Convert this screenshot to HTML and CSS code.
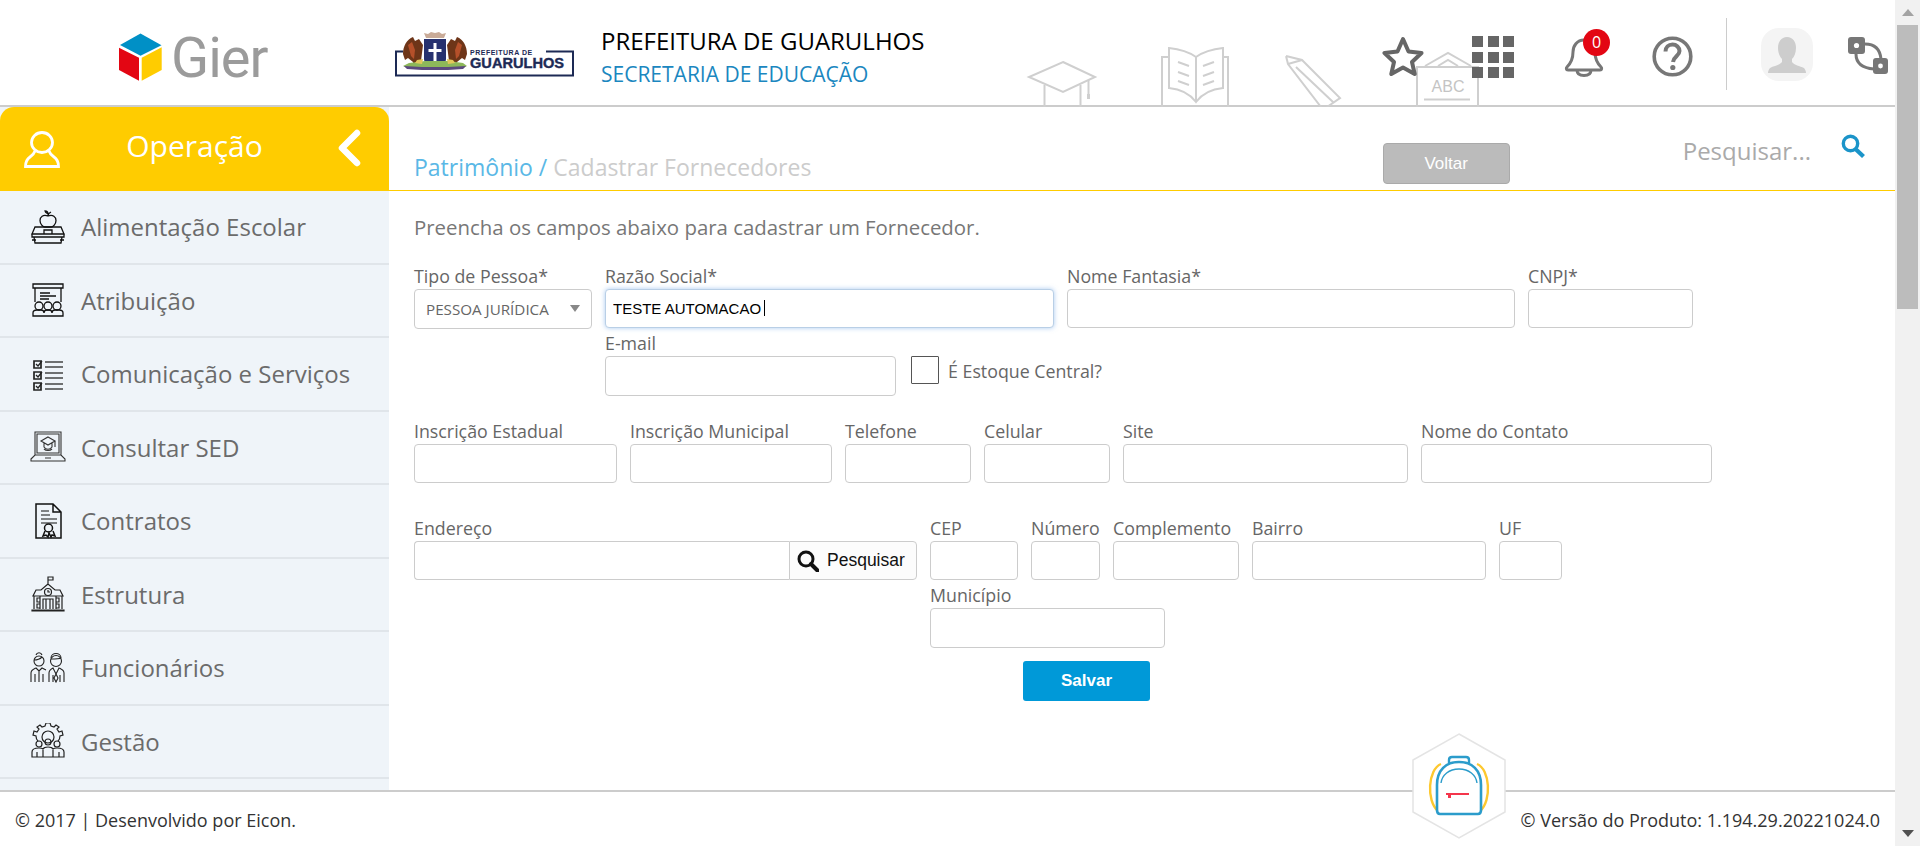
FILE: index.html
```html
<!DOCTYPE html>
<html lang="pt-BR">
<head>
    <meta charset="UTF-8">
    <meta name="viewport" content="width=device-width, initial-scale=1.0">
    <title>Cadastrar Fornecedores</title>
    <link rel="stylesheet" href="styles.css">
</head>
<body>
<div class="page">
    <div class="app">

        <header class="topbar">
            <svg class="deco" viewBox="1020 40 470 67" fill="none" stroke="#cfcfcf" stroke-width="2">
                <path d="M1063 62l32 15-32 15-34-15z"/>
                <path d="M1044.500 85v22M1080.500 85v22M1088.500 80v14"/>
                <path d="M1088.500 94v5" stroke-width="3"/>
                <path d="M1196 57c-7-5-17-8-27-9v40c11 1 21 6 27 14 6-8 16-13 27-14V48c-10 1-20 4-27 9zM1196 57v45"/>
                <path d="M1169 57h-7v50M1223 57h5v50"/>
                <path d="M1178 62l11 4M1178 72l11 4M1178 81l11 4M1214 62l-11 4M1214 72l-11 4M1214 81l-11 4"/>
                <path d="M1286 56l16 4 38 38-13 9M1286 56l2 8 33 43M1288 64l14-4M1296 67l37 35"/>
                <path d="M1417 107V67h61v40M1425 66l23-13 23 13M1438 66l10-6 10 6"/>
                <path d="M1424 99.500h46"/>
                <text class="deco-abc" x="1448" y="92">ABC</text>
            </svg>

            <div class="logo">
                <svg class="cube" viewBox="0 0 44 49">
                    <path fill="#0090c6" d="M21.500.5l21 11.700-21 10.500-20.500-10.700z"/>
                    <path fill="#e30613" d="M0 14.700l20 10v23L0 37z"/>
                    <path fill="#ffcc00" d="M22.700 24.700l20-10.400V37l-20 10.700z"/>
                </svg>
                <span class="logo-name">Gier</span>
            </div>

            <div class="city-logo">
                <svg class="city-art" viewBox="0 0 180 46">
                    <path d="M8 20.500H1v24h177v-24h-27" fill="none" stroke="#1d2a55" stroke-width="2"/>
                    <path fill="#6e3518" d="M8 23c0-8 4-15 10-17l2 4 4-2 4 6-2 16-4 4v4h-3l-1-7-5-4-3 2z"/>
                    <path fill="#6e3518" d="M72 23c0-8-4-15-10-17l-2 4-4-2-4 6 2 16 4 4v4h3l1-7 5-4 3 2z"/>
                    <path fill="#b5502a" d="M13 14l4-3 3 8-1 9-3-3zM67 14l-4-3-3 8 1 9 3-3z"/>
                    <path fill="#27316f" d="M29 8h22v20c0 4-5 7-11 9-6-2-11-5-11-9z"/>
                    <path fill="#fff" d="M38.500 12h3v6h5v3h-5v11h-3V21h-5v-3h5z"/>
                    <path fill="#c9ab98" d="M29 2l4 1 3-2 4 1 4-1 3 2 4-1-2 5H31z"/>
                    <path fill="#8db85a" d="M30 30h24l14 2 4 3-6 3H14l-6-3 6-3z"/>
                    <path fill="#5b4a7e" d="M9 35l18 1h26l18-1-3 3-15 1H27l-15-1z"/>
                    <path fill="#e3c65a" d="M52 28l6 1 2 3-7 1zM28 28l-6 1-2 3 7 1z"/>
                </svg>
                <span class="city-small">PREFEITURA DE</span>
                <span class="city-big">GUARULHOS</span>
            </div>

            <div class="titles">
                <div class="title-main">PREFEITURA DE GUARULHOS</div>
                <div class="title-sub">SECRETARIA DE EDUCAÇÃO</div>
            </div>

            <div class="tools">
                <svg class="tool-star" viewBox="0 0 42 40" fill="none" stroke="#666" stroke-width="4" stroke-linejoin="round">
                    <path d="M21 3l5.500 12.500 13 1.500-9.500 9 2.700 12L21 31.500 9.300 38l2.700-12-9.500-9 13-1.500z"/>
                </svg>
                <div class="tool-grid">
                    <i></i><i></i><i></i><i></i><i></i><i></i><i></i><i></i><i></i>
                </div>
                <div class="bell">
                    <svg class="tool-bell" viewBox="0 0 40 40" fill="none" stroke="#777" stroke-width="3" stroke-linejoin="round">
                        <path d="M20 3c-7 0-11 6-11 12 0 8-3 12-6 15-1 1-1 3 1 3h32c2 0 2-2 1-3-3-3-6-7-6-15 0-6-4-12-11-12z"/>
                        <path d="M13 33c0 4 3 5.500 7 5.500s7-1.500 7-5.500"/>
                    </svg>
                    <span class="badge">0</span>
                </div>
                <svg class="tool-help" viewBox="0 0 41 41" fill="none" stroke="#777" stroke-width="3.600">
                    <circle cx="20.500" cy="20.500" r="18.300"/>
                    <path d="M13.500 15.500c0-4 3-7 7-7s7 3 7 6.500c0 5-6 5.500-6.500 11" stroke-width="4"/>
                    <circle cx="20.800" cy="31.500" r="2.600" fill="#777" stroke="none"/>
                </svg>
                <span class="tool-line"></span>
                <div class="avatar">
                    <svg viewBox="0 0 52 53">
                        <path fill="#cdcdcd" d="M26 9c6 0 9 5 9 11 0 5-2 9-4 11v3c2 3 8 4 12 6 1 1 2 3 2 5H7c0-2 1-4 2-5 4-2 10-3 12-6v-3c-2-2-4-6-4-11 0-6 3-11 9-11z"/>
                    </svg>
                </div>
                <svg class="tool-net" viewBox="0 0 40 37">
                    <path fill="none" stroke="#777" stroke-width="3" d="M17 7c9 0 15 5 16 15M8 17c0 9 6 14 18 15"/>
                    <rect x="0" y="0" width="17" height="17" rx="3" fill="#777"/>
                    <rect x="25" y="21" width="15" height="16" rx="3" fill="#777"/>
                    <circle cx="8.500" cy="8.500" r="2.600" fill="#fff"/>
                    <circle cx="32.500" cy="29" r="2.400" fill="#fff"/>
                </svg>
            </div>
        </header>

        <div class="middle">
            <aside class="sidebar">
                <div class="side-head">
                    <svg class="side-user" viewBox="0 0 36 37" fill="none" stroke="#fff" stroke-width="2.800">
                        <ellipse cx="18" cy="11.500" rx="10.500" ry="10"/>
                        <path d="M11 20c-1 3-2 4-5 6-3 2-4.500 5-4.500 9.500h33c0-4.500-1.500-7.500-4.500-9.500-3-2-4-3-5-6"/>
                    </svg>
                    <span class="side-title">Operação</span>
                    <svg class="side-back" viewBox="0 0 24 38" fill="none" stroke="#fff" stroke-width="6.500" stroke-linecap="round" stroke-linejoin="round">
                        <path d="M20 4L5 19l15 15"/>
                    </svg>
                </div>
                <nav class="menu">
                    <a class="menu-item">
                        <svg class="menu-icon" viewBox="0 0 36 36" fill="none" stroke="#111" stroke-width="1.300">
                            <path d="M18 7c-5-2-8 1-8 4.500S13 18 15 18h6c2 0 5-3 5-6.500S23 5 18 7zM18 7c0-2 1-3 3-4M18 5c-2-1-3-2-3-3 2 0 3 1 3 3z"/>
                            <path d="M5 18h26l3 7H2zM2 25h32v3H2zM4 28l1 6h26l1-6M14 25v-4h8v4M2 31h4M30 31h4"/>
                        </svg>
                        <span>Alimentação Escolar</span>
                    </a>
                    <a class="menu-item">
                        <svg class="menu-icon" viewBox="0 0 36 36" fill="none" stroke="#111" stroke-width="1.300">
                            <path d="M3 2h30v4H3zM5 6v14M31 6v14M10 11h10M10 14h16M10 17h9"/>
                            <circle cx="9" cy="24" r="4"/><circle cx="18" cy="24" r="4"/><circle cx="27" cy="24" r="4"/>
                            <path d="M3 34v-3c0-2 2-3 4-3h4c2 0 3 1 3 3 0-2 1-3 3-3h2c2 0 3 1 3 3 0-2 1-3 3-3h4c2 0 4 1 4 3v3z"/>
                        </svg>
                        <span>Atribuição</span>
                    </a>
                    <a class="menu-item">
                        <svg class="menu-icon" viewBox="0 0 36 36" fill="none" stroke="#222" stroke-width="1.700">
                            <path d="M4 5h7v7H4zM4 16h7v7H4zM4 27h7v7H4z"/>
                            <path d="M6 8l2 2 4-5M6 19l2 2 4-5M6 30l2 2 4-5" stroke-width="1.300"/>
                            <path d="M15 6h18M15 11h18M15 17h18M15 22h18M15 28h18M15 33h18" stroke="#444"/>
                        </svg>
                        <span>Comunicação e Serviços</span>
                    </a>
                    <a class="menu-item">
                        <svg class="menu-icon" viewBox="0 0 36 36" fill="none" stroke="#333" stroke-width="1.100">
                            <path d="M5 3h26v23H5zM7 5h22v19H7zM1 30l4-4h26l4 4v2H1z"/>
                            <path d="M18 8l7 4-7 4-7-4zM14 14v4c2 3 6 3 8 0v-4M25 12v6M14 20c2 2 6 2 8 0M15 29h6"/>
                        </svg>
                        <span>Consultar SED</span>
                    </a>
                    <a class="menu-item">
                        <svg class="menu-icon" viewBox="0 0 36 36" fill="none" stroke="#111" stroke-width="1.500">
                            <path d="M6 1h17l8 8v26H6zM23 1v8h8"/>
                            <path d="M11 8h8M11 12h9M11 16h16M11 20h16" stroke-width="1.200"/>
                            <circle cx="18.500" cy="25" r="4"/>
                            <path d="M15 28l-2 5 3-1 2 2 1-4 2 4 1-2 3 1-2-5"/>
                        </svg>
                        <span>Contratos</span>
                    </a>
                    <a class="menu-item">
                        <svg class="menu-icon" viewBox="0 0 36 36" fill="none" stroke="#222" stroke-width="1.200">
                            <path d="M18 8V1h5v3h-5M18 8l-7 6H6L3 20h30l-3-6h-5zM4 20v13M32 20v13M2 34h32v1H2z"/>
                            <circle cx="18" cy="16" r="3.500"/>
                            <path d="M18 14v2h2M7 22h3v4H7zM26 22h3v4h-3zM7 28h3v4H7zM26 28h3v4h-3zM13 33V23h10v10M16 23v10M20 23v10M10 20v13M26 20v13"/>
                        </svg>
                        <span>Estrutura</span>
                    </a>
                    <a class="menu-item">
                        <svg class="menu-icon" viewBox="0 0 36 36" fill="none" stroke="#222" stroke-width="1.100">
                            <circle cx="9" cy="11" r="5"/><circle cx="26" cy="11" r="5.500"/>
                            <path d="M6 5c1-3 5-3 6 0M4 10c3 0 6-1 8-3M21 9c3 0 8 0 10-1M21 8c0-6 10-6 10 0"/>
                            <path d="M1 32V23c0-3 3-4 5-5l3 3 3-3 4 2M5 24v8M13 24v8M9 21v11M19 32V23c0-3 2-4 4-5l3 6 3-6c2 1 5 2 5 5v9M23 25v7M30 25v7M26 24l-2 4 2 4 2-4z"/>
                        </svg>
                        <span>Funcionários</span>
                    </a>
                    <a class="menu-item">
                        <svg class="menu-icon" viewBox="0 0 36 36" fill="none" stroke="#222" stroke-width="1.200">
                            <path d="M8 18c-1-1-2-3-2-5l-3-1 1-4 3 1 2-3-2-2 3-2 2 2 3-1 1-3h4l1 3 3 1 2-2 3 2-2 2 2 3 3-1 1 4-3 1c0 2-1 4-2 5"/>
                            <circle cx="18" cy="14" r="6"/>
                            <circle cx="18" cy="19" r="3"/><circle cx="9" cy="21" r="3"/><circle cx="27" cy="21" r="3"/>
                            <path d="M2 34v-5c0-3 3-4 7-4 2 0 3 0 4 1 1-2 3-2 5-2s4 0 5 2c1-1 2-1 4-1 4 0 7 1 7 4v5zM13 34v-7M23 34v-7M7 34v-5M29 34v-5"/>
                        </svg>
                        <span>Gestão</span>
                    </a>
                </nav>
            </aside>

            <main class="content">
                <div class="content-head">
                    <div class="crumbs"><span class="crumb-link">Patrimônio /</span> Cadastrar Fornecedores</div>
                    <button class="btn-back" type="button">Voltar</button>
                    <div class="quick-search">Pesquisar...</div>
                    <svg class="quick-icon" viewBox="0 0 25 24" fill="none" stroke="#1b94c9" stroke-width="3.400">
                        <circle cx="9.500" cy="9.500" r="7.200"/>
                        <path d="M14.500 15l8 7.500" stroke-width="4.200"/>
                    </svg>
                </div>

                <form class="form">
                    <p class="intro">Preencha os campos abaixo para cadastrar um Fornecedor.</p>

                    <div class="row">
                        <div class="field f-tipo">
                            <label>Tipo de Pessoa*</label>
                            <div class="select-box">
                                <select class="select"><option>PESSOA JURÍDICA</option></select>
                            </div>
                        </div>
                        <div class="stack">
                            <div class="row">
                                <div class="field f-razao">
                                    <label>Razão Social*</label>
                                    <div class="typed">
                                        <input class="input input-focus" type="text" value="TESTE AUTOMACAO">
                                        <span class="caret"></span>
                                    </div>
                                </div>
                                <div class="field f-fantasia">
                                    <label>Nome Fantasia*</label>
                                    <input class="input" type="text">
                                </div>
                                <div class="field f-cnpj">
                                    <label>CNPJ*</label>
                                    <input class="input" type="text">
                                </div>
                            </div>
                            <div class="row row-sub">
                                <div class="field f-email">
                                    <label>E-mail</label>
                                    <input class="input input-tall" type="text">
                                </div>
                                <div class="check-wrap">
                                    <span class="check"></span>
                                    <span class="check-label">É Estoque Central?</span>
                                </div>
                            </div>
                        </div>
                    </div>

                    <div class="row row-gap">
                        <div class="field f-ie"><label>Inscrição Estadual</label><input class="input" type="text"></div>
                        <div class="field f-im"><label>Inscrição Municipal</label><input class="input" type="text"></div>
                        <div class="field f-tel"><label>Telefone</label><input class="input" type="text"></div>
                        <div class="field f-tel"><label>Celular</label><input class="input" type="text"></div>
                        <div class="field f-site"><label>Site</label><input class="input" type="text"></div>
                        <div class="field f-contato"><label>Nome do Contato</label><input class="input" type="text"></div>
                    </div>

                    <div class="row row-gap2">
                        <div class="field f-end">
                            <label>Endereço</label>
                            <div class="search-group">
                                <input class="input input-join" type="text">
                                <button class="btn-find" type="button">
                                    <svg class="find-icon" viewBox="0 0 22 22" fill="none" stroke="#111" stroke-width="3">
                                        <circle cx="9" cy="9" r="7"/>
                                        <path d="M14 14l6.500 6.500" stroke-width="4" stroke-linecap="round"/>
                                    </svg>
                                    Pesquisar
                                </button>
                            </div>
                        </div>
                        <div class="stack">
                            <div class="row">
                                <div class="field f-cep"><label>CEP</label><input class="input" type="text"></div>
                                <div class="field f-num"><label>Número</label><input class="input" type="text"></div>
                                <div class="field f-comp"><label>Complemento</label><input class="input" type="text"></div>
                                <div class="field f-bairro"><label>Bairro</label><input class="input" type="text"></div>
                                <div class="field f-uf"><label>UF</label><input class="input" type="text"></div>
                            </div>
                            <div class="row row-sub">
                                <div class="field f-mun"><label>Município</label><input class="input input-tall" type="text"></div>
                            </div>
                        </div>
                    </div>

                    <button class="btn-save" type="button">Salvar</button>
                </form>
            </main>
        </div>

        <footer class="footer">
            <span>© 2017 | Desenvolvido por Eicon.</span>
            <span>© Versão do Produto: 1.194.29.20221024.0</span>
        </footer>

        <svg class="hexa" viewBox="0 0 94 106">
            <path d="M47 1l46 26v52l-46 26L1 79V27z" fill="#fff" stroke="#e4e4e4" stroke-width="1.500"/>
            <path d="M29 31C16 36 14 68 26 78M65 31c13 5 15 37 3 47" fill="none" stroke="#fdc82f" stroke-width="2.400"/>
            <path d="M25 77V52c0-15 9-23 22-23s22 8 22 23v25c0 2-1 4-3 4H28c-2 0-3-2-3-4z" fill="#fff" stroke="#2b9ccb" stroke-width="2.600"/>
            <path d="M29 50c1-8 8-14 18-14s17 6 18 14" fill="none" stroke="#2b9ccb" stroke-width="1.400"/>
            <path d="M37 30v-3c0-2 1-3 3-3h14c2 0 3 1 3 3v3" fill="none" stroke="#2b9ccb" stroke-width="2.400"/>
            <path d="M34 61h23" stroke="#f4364c" stroke-width="2"/>
            <path d="M36 62h3v3h-3z" fill="#f4364c"/>
        </svg>
    </div>

    <div class="scrollbar">
        <div class="scroll-btn"><span class="arrow-up"></span></div>
        <div class="scroll-thumb"></div>
        <div class="scroll-rest"></div>
        <div class="scroll-btn"><span class="arrow-down"></span></div>
    </div>
</div>
</body>
</html>
```

FILE: styles.css
```css
* {
    box-sizing: border-box;
}

html, body {
    margin: 0;
    padding: 0;
    height: 100%;
    overflow: hidden;
    background-color: #fff;
    font-family: "Open Sans", Arial, sans-serif;
}

.page {
    display: flex;
    height: 846px;
}

.app {
    position: relative;
    flex: 1;
    display: flex;
    flex-direction: column;
    min-width: 0;
}

/* top bar */
.topbar {
    position: relative;
    display: flex;
    align-items: flex-start;
    height: 107px;
    flex: none;
    border-bottom: 2px solid #ccc;
}

.deco {
    position: absolute;
    left: 1020px;
    top: 40px;
    width: 470px;
    height: 67px;
}

.deco-abc {
    font-family: "Liberation Sans", Arial, sans-serif;
    font-size: 16px;
    fill: #c4c4c4;
    stroke: none;
    text-anchor: middle;
}

.logo {
    display: flex;
    align-items: flex-start;
    width: 395px;
    padding: 33px 0 0 119px;
    flex: none;
}

.cube {
    width: 44px;
    height: 49px;
}

.logo-name {
    margin: -9px 0 0 8px;
    font-family: Roboto, Arial, sans-serif;
    font-weight: 400;
    font-size: 56px;
    line-height: 68px;
    letter-spacing: -1px;
    color: #9b9b9b;
}

.city-logo {
    position: relative;
    width: 180px;
    height: 46px;
    margin-top: 31px;
    flex: none;
}

.city-art {
    display: block;
    width: 180px;
    height: 46px;
}

.city-small {
    position: absolute;
    left: 75px;
    top: 18px;
    font-family: "Liberation Sans", Arial, sans-serif;
    font-weight: bold;
    font-size: 7px;
    line-height: 8px;
    letter-spacing: 0.500px;
    color: #1d2a55;
}

.city-big {
    position: absolute;
    left: 75px;
    top: 24px;
    font-family: "Liberation Sans", Arial, sans-serif;
    font-weight: bold;
    font-size: 14.600px;
    line-height: 16px;
    -webkit-text-stroke: 0.400px #1d2a55;
    color: #1d2a55;
}

.titles {
    margin: 25px 0 0 26px;
}

.title-main {
    font-size: 24px;
    line-height: 32px;
    color: #000;
}

.title-sub {
    margin-top: 2px;
    font-size: 21px;
    line-height: 30px;
    color: #1b87c0;
}

.tools {
    position: absolute;
    right: 7px;
    top: 18px;
    display: flex;
    align-items: flex-start;
}

.tool-star {
    width: 42px;
    height: 40px;
    margin-top: 18px;
}

.tool-grid {
    display: grid;
    grid-template-columns: repeat(3, 11px);
    grid-auto-rows: 11px;
    gap: 4.500px;
    margin: 18px 0 0 48px;
}

.tool-grid i {
    background-color: #666;
}

.bell {
    position: relative;
    width: 40px;
    height: 40px;
    margin: 19px 0 0 50px;
}

.tool-bell {
    width: 40px;
    height: 40px;
}

.badge {
    position: absolute;
    left: 19px;
    top: -8px;
    width: 27px;
    height: 27px;
    border-radius: 50%;
    background-color: #e30613;
    color: #fff;
    font-size: 16px;
    line-height: 27px;
    text-align: center;
}

.tool-help {
    width: 41px;
    height: 41px;
    margin: 18px 1px 0 48px;
}

.tool-line {
    width: 1px;
    height: 72px;
    margin-left: 32px;
    background-color: #ccc;
}

.avatar {
    width: 52px;
    height: 53px;
    margin: 10px 0 0 34px;
    border-radius: 18px;
    background-color: #f4f4f4;
}

.avatar svg {
    display: block;
    width: 52px;
    height: 53px;
}

.tool-net {
    width: 40px;
    height: 37px;
    margin: 19px 0 0 35px;
}

/* sidebar */
.middle {
    flex: 1;
    display: flex;
    min-height: 0;
}

.sidebar {
    width: 389px;
    flex: none;
    background-color: #eff4f9;
    overflow: hidden;
}

.side-head {
    display: flex;
    align-items: center;
    height: 84px;
    padding: 0 28px 0 24px;
    background-color: #ffcc00;
    border-radius: 14px 14px 0 0;
}

.side-user {
    width: 36px;
    height: 37px;
}

.side-title {
    flex: 1;
    margin: -7px 0 0 -8px;
    text-align: center;
    font-size: 30px;
    color: #fff;
}

.side-back {
    width: 24px;
    height: 38px;
    margin-top: -3px;
}

.menu-item {
    display: flex;
    align-items: center;
    gap: 15px;
    height: 73.500px;
    padding-left: 30px;
    border-bottom: 2px solid #e0e5ea;
    font-size: 24px;
    color: #6b6b6b;
}

.menu-icon {
    width: 36px;
    height: 36px;
    flex: none;
}

/* content */
.content {
    flex: 1;
    min-width: 0;
}

.content-head {
    display: flex;
    align-items: flex-start;
    height: 84px;
    padding: 0 29px 0 25px;
    border-bottom: 1px solid #ffcc00;
}

.crumbs {
    margin-top: 43px;
    font-size: 23px;
    line-height: 34px;
    color: #ccc;
}

.crumb-link {
    color: #5ab8e6;
}

.btn-back {
    width: 127px;
    height: 41px;
    margin: 36px 0 0 auto;
    border: 1px solid #aaa;
    border-radius: 4px;
    background-color: #bbb;
    color: #fff;
    font-family: "Liberation Sans", Arial, sans-serif;
    font-size: 17px;
}

.quick-search {
    margin: 27px 0 0 173px;
    font-size: 24px;
    line-height: 34px;
    color: #aaa;
}

.quick-icon {
    width: 25px;
    height: 24px;
    margin: 27px 0 0 30px;
}

.form {
    padding: 23px 0 0 25px;
}

.intro {
    margin: 0 0 26px;
    font-size: 20.400px;
    line-height: 26px;
    color: #777;
}

.row {
    display: flex;
    align-items: flex-start;
    gap: 13px;
}

.row-sub {
    margin-top: 5px;
}

.row-gap {
    margin-top: 25px;
}

.row-gap2 {
    margin-top: 35px;
}

.stack {
    display: flex;
    flex-direction: column;
}

.field label {
    display: block;
    height: 23px;
    font-size: 17.800px;
    line-height: 21px;
    color: #666;
    white-space: nowrap;
}

.f-tipo { width: 178px; }
.f-razao { width: 449px; }
.f-fantasia { width: 448px; }
.f-cnpj { width: 165px; }
.f-email { width: 291px; }
.f-ie { width: 203px; }
.f-im { width: 202px; }
.f-tel { width: 126px; }
.f-site { width: 285px; }
.f-contato { width: 291px; }
.f-end { width: 503px; }
.f-cep { width: 88px; }
.f-num { width: 69px; }
.f-comp { width: 126px; }
.f-bairro { width: 234px; }
.f-uf { width: 63px; }
.f-mun { width: 235px; }

.input {
    display: block;
    width: 100%;
    height: 39px;
    padding: 0 7px;
    border: 1px solid #ccc;
    border-radius: 4px;
    outline: none;
    background-color: #fff;
    font-family: "Liberation Sans", Arial, sans-serif;
    font-size: 15px;
    color: #000;
}

.input-tall {
    height: 40px;
}

.input-focus {
    border-color: #b9cfe6;
    box-shadow: 0 0 5px rgba(102, 160, 230, 0.55);
}

.typed {
    position: relative;
}

.caret {
    position: absolute;
    left: 159px;
    top: 11px;
    width: 1px;
    height: 16px;
    background-color: #000;
}

.select-box {
    position: relative;
}

.select-box::after {
    content: "";
    position: absolute;
    left: 156px;
    top: 16px;
    border-left: 5px solid transparent;
    border-right: 5px solid transparent;
    border-top: 7px solid #888;
}

.select {
    display: block;
    width: 100%;
    height: 40px;
    padding: 0 0 0 11px;
    border: 1px solid #ccc;
    border-radius: 4px;
    outline: none;
    background-color: #fff;
    appearance: none;
    font-family: "Open Sans", Arial, sans-serif;
    font-size: 15.200px;
    color: #666;
}

.check-wrap {
    display: flex;
    align-items: flex-start;
    gap: 9px;
    margin: 23px 0 0 2px;
}

.check {
    width: 28px;
    height: 28px;
    border: 1px solid #555;
    border-radius: 1px;
    background-color: #fff;
}

.check-label {
    font-size: 17.800px;
    line-height: 30px;
    color: #666;
}

.search-group {
    display: flex;
}

.input-join {
    width: 375px;
    border-right: none;
    border-radius: 4px 0 0 4px;
}

.btn-find {
    display: flex;
    align-items: center;
    gap: 8px;
    width: 128px;
    height: 39px;
    padding: 0 0 0 7px;
    border: 1px solid #ccc;
    border-radius: 0 4px 4px 0;
    background-color: #fcfcfc;
    color: #111;
    font-family: "Liberation Sans", Arial, sans-serif;
    font-size: 17.500px;
}

.find-icon {
    width: 22px;
    height: 22px;
    flex: none;
}

.btn-save {
    display: block;
    width: 127px;
    height: 40px;
    margin: 13px 0 0 609px;
    border: none;
    border-radius: 3px;
    background-color: #0099d8;
    color: #fff;
    font-family: "Liberation Sans", Arial, sans-serif;
    font-size: 17px;
    font-weight: bold;
}

/* footer */
.footer {
    display: flex;
    justify-content: space-between;
    align-items: center;
    height: 56px;
    flex: none;
    padding: 1px 15px 0;
    border-top: 2px solid #ccc;
    background-color: #fff;
    font-size: 18px;
    color: #333;
}

.hexa {
    position: absolute;
    left: 1412px;
    top: 733px;
    width: 94px;
    height: 106px;
}

/* scrollbar drawn on the right edge */
.scrollbar {
    display: flex;
    flex-direction: column;
    width: 25px;
    flex: none;
    background-color: #f1f1f1;
}

.scroll-btn {
    height: 25px;
    flex: none;
    display: flex;
    align-items: center;
    justify-content: center;
}

.arrow-up {
    border-left: 6px solid transparent;
    border-right: 6px solid transparent;
    border-bottom: 7px solid #a3a3a3;
}

.arrow-down {
    border-left: 6px solid transparent;
    border-right: 6px solid transparent;
    border-top: 7px solid #505050;
}

.scroll-thumb {
    height: 284px;
    margin: 0 2px;
    background-color: #bcbcbc;
}

.scroll-rest {
    flex: 1;
}
```
